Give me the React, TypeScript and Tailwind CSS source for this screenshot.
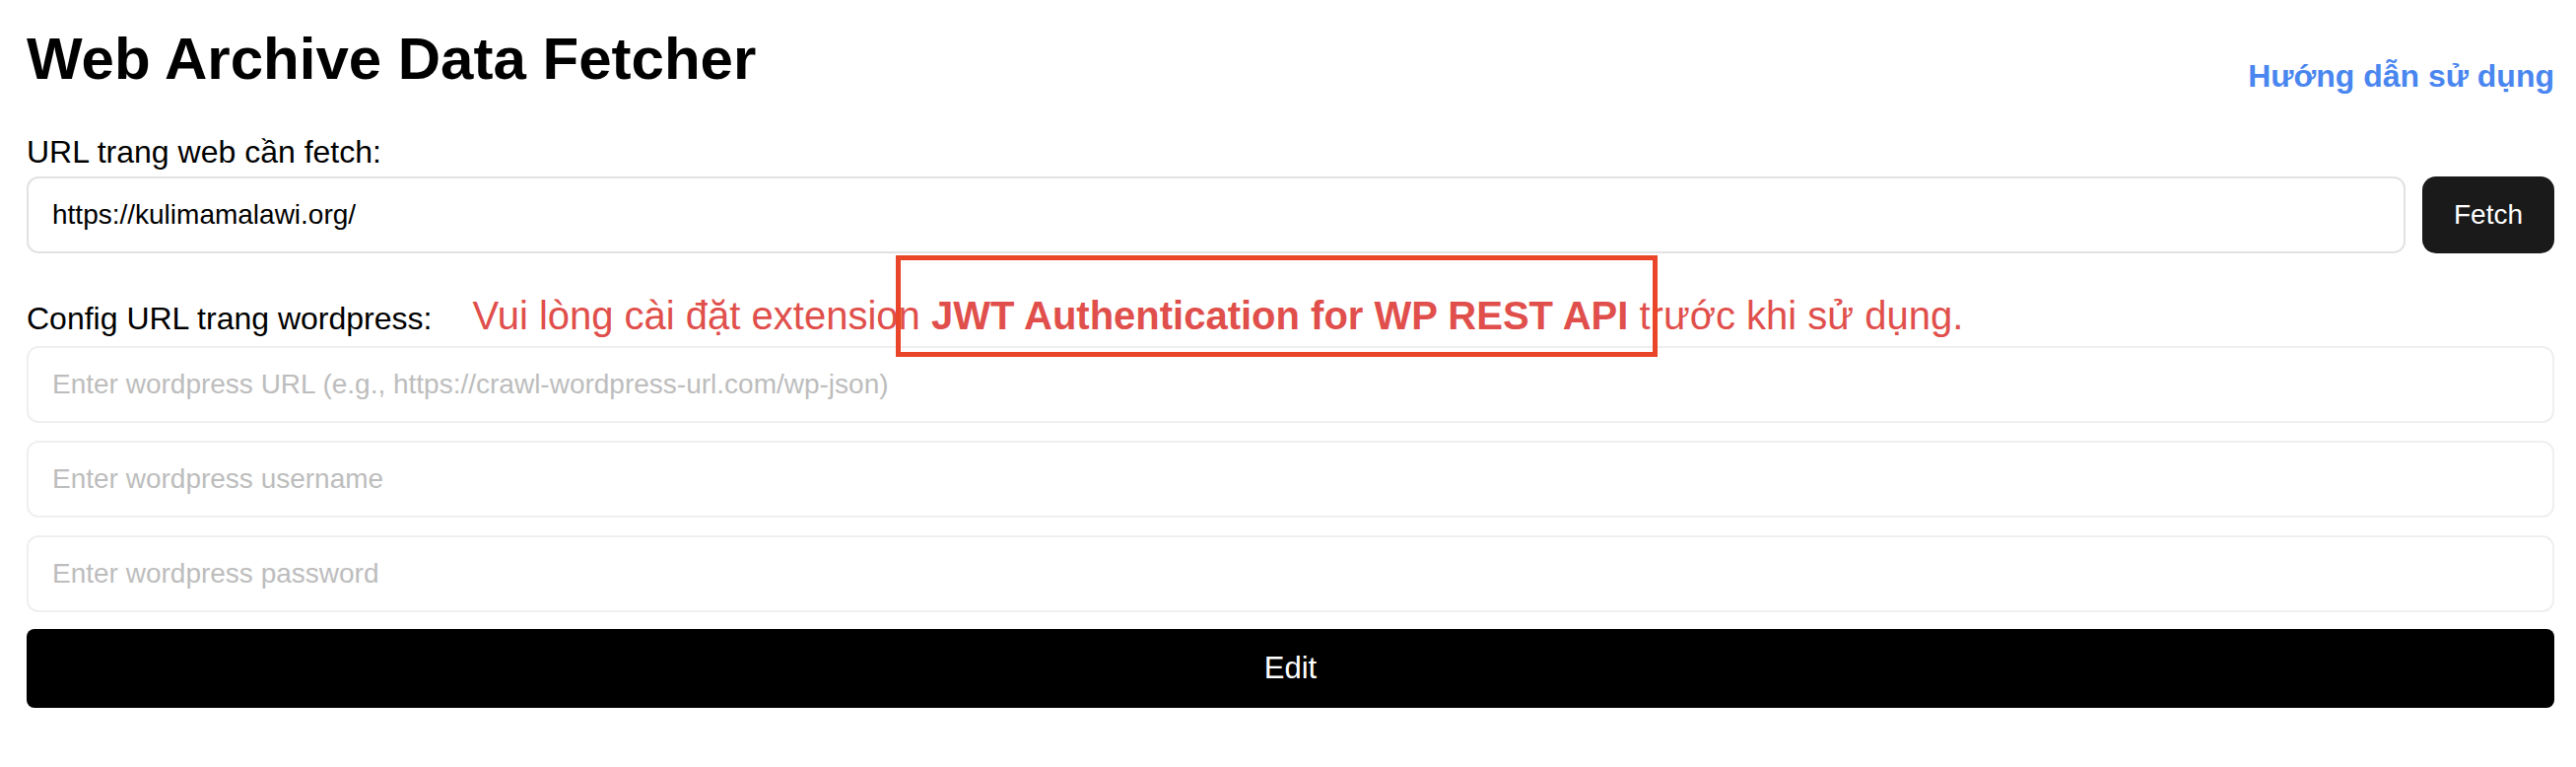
import { useState } from "react";

export default function App() {
  const [url, setUrl] = useState("https://kulimamalawi.org/");
  const [wpUrl, setWpUrl] = useState("");
  const [username, setUsername] = useState("");
  const [password, setPassword] = useState("");

  const inputClass =
    "h-[78px] w-full rounded-[12px] border-2 border-[#efefef] bg-white px-[24px] text-[28px] text-black outline-none placeholder:text-[#bdbdbd]";

  return (
    <div className="relative min-h-[778px] bg-white pl-[27px] pr-[22px] font-['Liberation_Sans',Arial,sans-serif] text-black">
      {/* header */}
      <div className="flex items-start justify-between pt-[25px]">
        <h1 className="text-[60px] font-bold leading-[70px]">Web Archive Data Fetcher</h1>
        <a href="#" className="mt-[32px] text-[32px] font-bold leading-[40px] text-[#4a86ef]">
          Hướng dẫn sử dụng
        </a>
      </div>

      {/* fetch url */}
      <label className="mt-[37px] block text-[32px] leading-[40px]">URL trang web cần fetch:</label>
      <div className="mt-[5px] flex gap-[17px]">
        <input
          value={url}
          onChange={(e) => setUrl(e.target.value)}
          className="h-[78px] flex-1 rounded-[12px] border-2 border-[#e2e2e2] bg-white px-[24px] text-[28px] text-black outline-none"
        />
        <button className="w-[134px] rounded-[14px] bg-[#1a1a1a] text-[28px] text-white">Fetch</button>
      </div>

      {/* wordpress config */}
      <div className="mt-[39px] flex items-baseline gap-[41px]">
        <span className="text-[32px] leading-[40px]">Config URL trang wordpress:</span>
        <span className="text-[40px] leading-[48px] text-[#e04f4b]">
          Vui lòng cài đặt extension <b className="font-bold">JWT Authentication for WP REST API</b> trước khi sử dụng.
        </span>
      </div>
      <div className="mt-[7px] flex flex-col gap-[18px]">
        <input
          value={wpUrl}
          onChange={(e) => setWpUrl(e.target.value)}
          placeholder="Enter wordpress URL (e.g., https://crawl-wordpress-url.com/wp-json)"
          className={inputClass}
        />
        <input
          value={username}
          onChange={(e) => setUsername(e.target.value)}
          placeholder="Enter wordpress username"
          className={inputClass}
        />
        <input
          type="password"
          value={password}
          onChange={(e) => setPassword(e.target.value)}
          placeholder="Enter wordpress password"
          className={inputClass}
        />
      </div>
      <button className="mt-[17px] h-[80px] w-full rounded-[8px] bg-black text-[31px] text-white">Edit</button>

      {/* annotation box drawn over the screenshot */}
      <div className="pointer-events-none absolute left-[909px] top-[259px] h-[103px] w-[773px] border-[5px] border-[#ea4429]" />
    </div>
  );
}
